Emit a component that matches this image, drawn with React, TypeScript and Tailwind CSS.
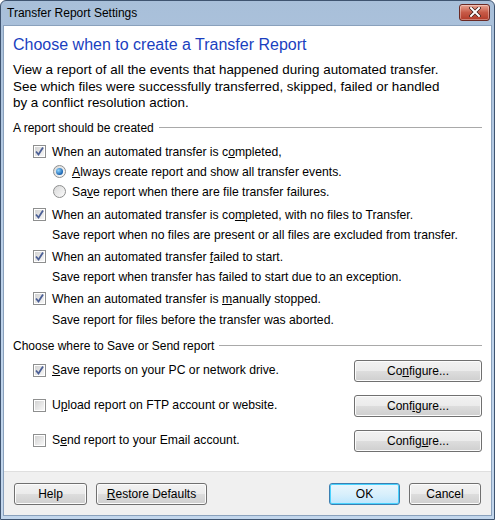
import type { ReactNode } from "react";

const ui = "font-['Liberation_Sans',Arial,sans-serif]";

function CheckBox({ checked }: { checked: boolean }) {
  return (
    <span className="flex h-[13px] w-[13px] shrink-0 items-center justify-center border border-[#8e8f8f] bg-white">
      <span className="relative flex h-[9px] w-[9px] items-center justify-center bg-gradient-to-br from-[#d3d3d3] to-[#f7f7f7]">
        {checked ? (
          <svg width="11" height="11" viewBox="0 0 11 11" className="absolute -left-[1px] -top-[1px]">
            <path d="M2 5.5 L4.5 8.5 L9 1.5" fill="none" stroke="#4b5f96" strokeWidth="1.8" />
          </svg>
        ) : null}
      </span>
    </span>
  );
}

function Radio({ checked }: { checked: boolean }) {
  return (
    <span className="flex h-[13px] w-[13px] shrink-0 items-center justify-center rounded-full border border-[#8e8f8f] bg-gradient-to-br from-[#d8d8d8] to-[#fbfbfb]">
      {checked ? (
        <span className="h-[7px] w-[7px] rounded-full bg-[radial-gradient(circle_at_35%_35%,#8fd6ff,#1a63b0_70%)]" />
      ) : null}
    </span>
  );
}

function Section({ label, className }: { label: string; className: string }) {
  return (
    <div className={`flex h-[16px] items-center gap-[5px] ${className}`}>
      <span className="text-[12px] leading-[16px] text-black">{label}</span>
      <span className="h-px flex-1 bg-[#a9a9a9]" />
    </div>
  );
}

function Button({ children, className = "", primary = false }: { children: ReactNode; className?: string; primary?: boolean }) {
  return (
    <button
      type="button"
      className={`flex h-[22px] items-center justify-center rounded-[3px] border text-[12px] text-black ${
        primary
          ? "border-[#3c7fb1] bg-gradient-to-b from-[#eaf6fd] via-[#d9f0fc] to-[#bee6fd] shadow-[inset_0_0_0_1px_#48d2fe]"
          : "border-[#707070] bg-[linear-gradient(#f2f2f2_0%,#ebebeb_50%,#dddddd_51%,#cfcfcf_100%)] shadow-[inset_0_0_0_1px_#fcfcfc]"
      } ${className}`}
    >
      {children}
    </button>
  );
}

export default function App() {
  return (
    <div className={`h-[520px] w-[495px] bg-white ${ui}`}>
      <div className="flex h-full w-full flex-col rounded-t-[6px] border border-[#3f5470] bg-gradient-to-b from-[#a8bfd9] via-[#bcd1e9] to-[#c2d6ec]">
        <div className="flex h-[24px] shrink-0 items-center justify-between pl-[6px] pr-[4px]">
          <span className="text-[12px] text-black">Transfer Report Settings</span>
          <span className="mt-[-2px] flex h-[17px] w-[31px] items-center justify-center rounded-[3px] border border-[#6b2a24] bg-gradient-to-b from-[#e8a493] via-[#c75a47] to-[#b23a28] shadow-[inset_0_0_0_1px_rgba(255,255,255,0.35)]">
            <svg width="12" height="10" viewBox="0 0 12 10">
              <path d="M2 1 L10 9 M10 1 L2 9" stroke="#3a1a16" strokeWidth="3.4" strokeLinecap="square" />
              <path d="M2 1 L10 9 M10 1 L2 9" stroke="#ffffff" strokeWidth="2" strokeLinecap="square" />
            </svg>
          </span>
        </div>

        <div className="mx-[2px] mb-[3px] flex flex-1 flex-col border border-[#8aa1bc] bg-white">
          <div className="flex flex-1 flex-col px-[9px] pt-[9px]">
            <h1 className="text-[16px] leading-[20px] text-[#1a3fbf]">Choose when to create a Transfer Report</h1>
            <p className="mt-[7px] whitespace-nowrap text-[13.4px] leading-[16.5px] text-black">
              View a report of all the events that happened during automated transfer.
              <br />
              See which files were successfully transferred, skipped, failed or handled
              <br />
              by a conflict resolution action.
            </p>

            <Section label="A report should be created" className="mt-[8px]" />

            <div className="ml-[20px] flex flex-col text-[12.2px] leading-[18px] text-black">
              <label className="mt-[7px] flex h-[18px] items-center gap-[6px]">
                <CheckBox checked />
                <span>
                  When an automated transfer is c<u>o</u>mpleted,
                </span>
              </label>
              <label className="ml-[20px] mt-[2px] flex h-[18px] items-center gap-[6px]">
                <Radio checked />
                <span>
                  <u>A</u>lways create report and show all transfer events.
                </span>
              </label>
              <label className="ml-[20px] mt-[2px] flex h-[18px] items-center gap-[6px]">
                <Radio checked={false} />
                <span>
                  Sa<u>v</u>e report when there are file transfer failures.
                </span>
              </label>

              <label className="mt-[5px] flex h-[18px] items-center gap-[6px]">
                <CheckBox checked />
                <span>
                  When an automated transfer is co<u>m</u>pleted, with no files to Transfer.
                </span>
              </label>
              <p className="ml-[19px] mt-[2px] h-[18px]">Save report when no files are present or all files are excluded from transfer.</p>

              <label className="mt-[4px] flex h-[18px] items-center gap-[6px]">
                <CheckBox checked />
                <span>
                  When an automated transfer <u>f</u>ailed to start.
                </span>
              </label>
              <p className="ml-[19px] mt-[2px] h-[18px]">Save report when transfer has failed to start due to an exception.</p>

              <label className="mt-[4px] flex h-[18px] items-center gap-[6px]">
                <CheckBox checked />
                <span>
                  When an automated transfer is <u>m</u>anually stopped.
                </span>
              </label>
              <p className="ml-[19px] mt-[3px] h-[18px]">Save report for files before the transfer was aborted.</p>
            </div>

            <Section label="Choose where to Save or Send report" className="mt-[9px]" />

            <div className="ml-[20px] flex flex-col text-[12.2px] text-black">
              <div className="mt-[6px] flex h-[22px] items-center justify-between">
                <label className="flex items-center gap-[6px]">
                  <CheckBox checked />
                  <span>
                    <u>S</u>ave reports on your PC or network drive.
                  </span>
                </label>
                <Button className="w-[128px]">
                  <span>
                    Co<u>n</u>figure...
                  </span>
                </Button>
              </div>
              <div className="mt-[13px] flex h-[22px] items-center justify-between">
                <label className="flex items-center gap-[6px]">
                  <CheckBox checked={false} />
                  <span>
                    U<u>p</u>load report on FTP account or website.
                  </span>
                </label>
                <Button className="w-[128px]">
                  <span>
                    Conf<u>i</u>gure...
                  </span>
                </Button>
              </div>
              <div className="mt-[13px] flex h-[22px] items-center justify-between">
                <label className="flex items-center gap-[6px]">
                  <CheckBox checked={false} />
                  <span>
                    S<u>e</u>nd report to your Email account.
                  </span>
                </label>
                <Button className="w-[128px]">
                  <span>
                    Config<u>u</u>re...
                  </span>
                </Button>
              </div>
            </div>
          </div>

          <div className="flex h-[44px] shrink-0 items-center border-t border-[#dfdfdf] bg-[#f0f0f0] px-[10px]">
            <Button className="w-[73px]">Help</Button>
            <Button className="ml-[9px] w-[111px]">
              <span>
                <u>R</u>estore Defaults
              </span>
            </Button>
            <Button primary className="ml-auto w-[71px]">
              OK
            </Button>
            <Button className="ml-[9px] w-[72px]">Cancel</Button>
          </div>
        </div>
      </div>
    </div>
  );
}
